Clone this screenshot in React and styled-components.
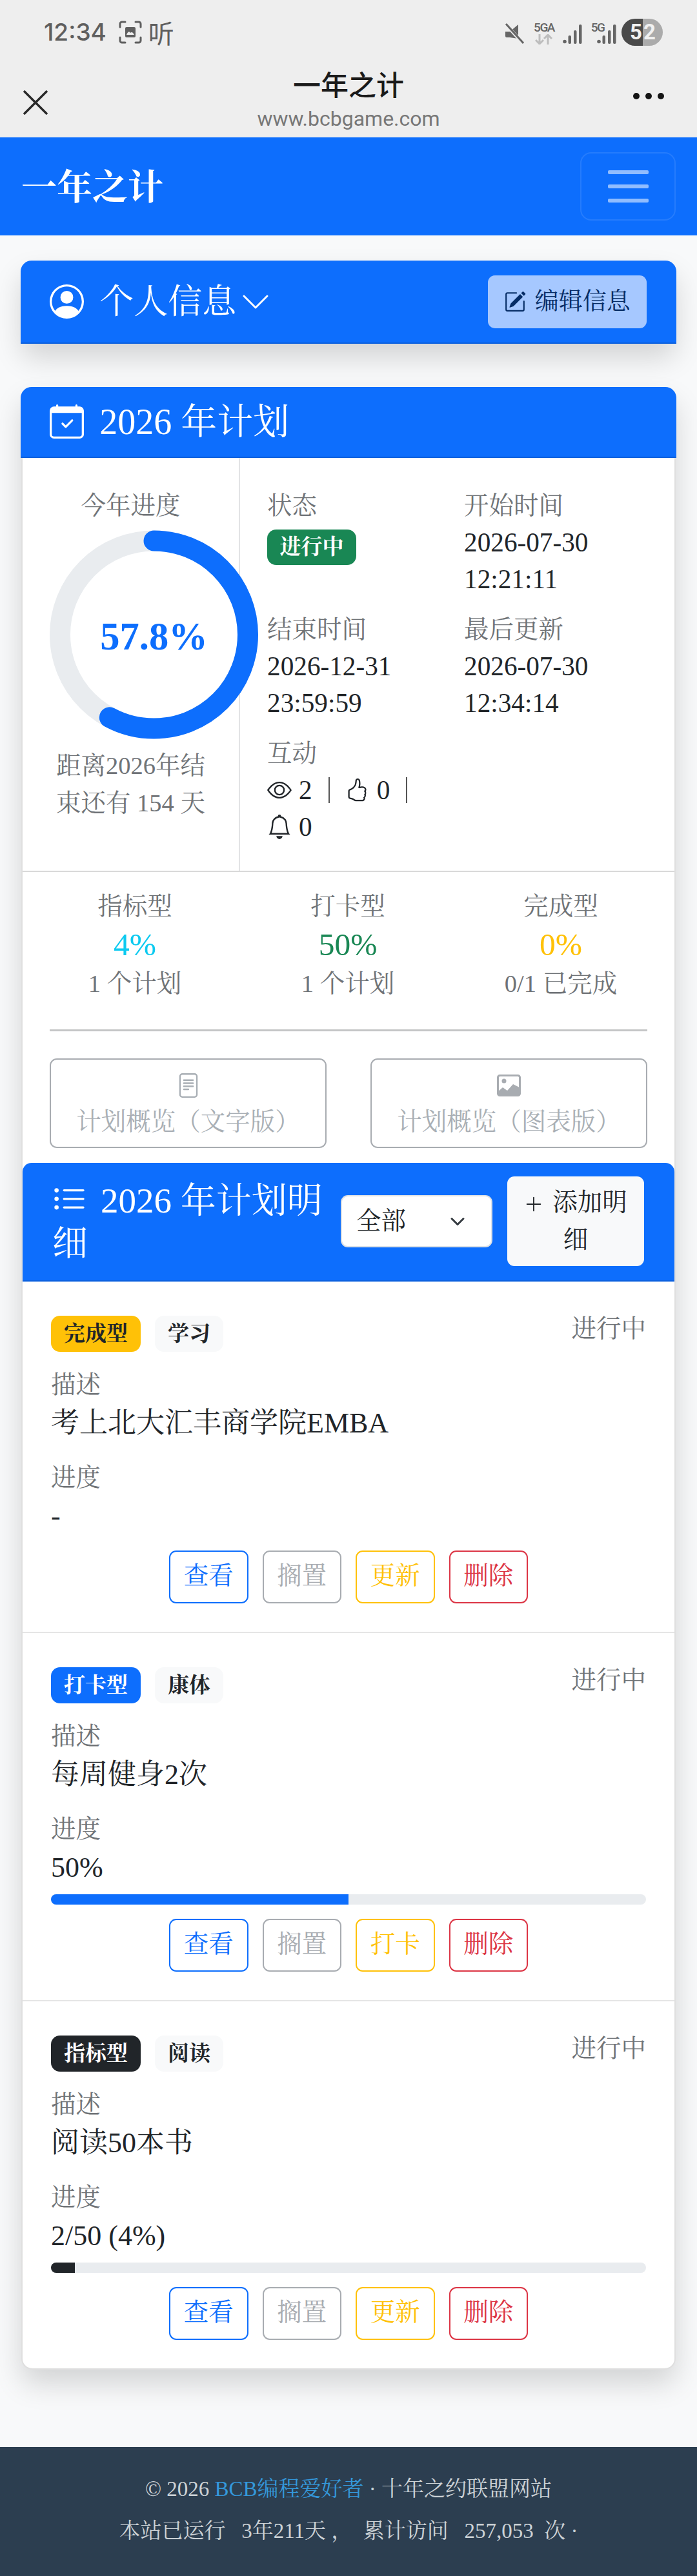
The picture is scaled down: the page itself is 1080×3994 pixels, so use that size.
import React from 'react'
import styled, { createGlobalStyle } from 'styled-components'
import {
  BsPersonCircle, BsPencilSquare, BsCalendarCheck, BsEye, BsHandThumbsUp, BsBell,
  BsFileText, BsListUl, BsPlusLg, BsChevronDown,
} from 'react-icons/bs'

const GlobalStyle = createGlobalStyle`
  html, body { margin: 0; padding: 0; }
  body {
    background: #f8f9fa;
    color: #212529;
    font-family: "Liberation Serif", "Noto Serif CJK SC", "Noto Sans CJK SC", serif;
    font-size: 44px;
    line-height: 1.5;
  }
  * { box-sizing: border-box; }
`

const Page = styled.div`
  width: 1080px;
  height: 3994px;
  overflow: hidden;
  display: flex;
  flex-direction: column;
`

/* phone chrome */
const Chrome = styled.div`
  height: 213px;
  flex-shrink: 0;
  background: #eeeeee;
  display: flex;
  flex-direction: column;
`
const StatusBar = styled.div`
  height: 100px;
  padding: 29px 53px 0 68px;
  display: flex;
  justify-content: space-between;
  align-items: flex-start;
`
const StatusLeft = styled.div`
  display: flex;
  align-items: center;
  height: 42px;
  gap: 19px;
  color: #5f5f5f;
  font-family: Inter, Roboto, sans-serif;
  font-size: 37px;
  font-weight: 500;
`
const ListenMark = styled.span`
  font-family: "Noto Sans CJK SC", sans-serif;
  font-size: 40px;
  font-weight: 400;
  margin-left: -9px;
`
const StatusRight = styled.div`
  display: flex;
  align-items: flex-start;
`
const NetStack = styled.div`
  width: 30px;
  margin-left: 16px;
  display: flex;
  flex-direction: column;
  align-items: center;
  color: #666;
  font-family: Roboto, sans-serif;
  font-size: 19px;
  font-weight: 500;
  letter-spacing: -1.5px;
  line-height: 20px;
  margin-top: 4px;
`
const Battery = styled.div`
  width: 64px;
  height: 42px;
  margin-left: 8px;
  border-radius: 21px;
  overflow: hidden;
  display: grid;
  grid-template-columns: 33px 31px;
  font-family: Roboto, sans-serif;
  font-size: 33px;
  font-weight: 700;
  line-height: 42px;
  color: #f1f1f1;
`
const BatteryCell = styled.span`
  background: ${p => p.$bg};
  text-align: ${p => p.$align};
  padding: ${p => p.$pad};
`
const TitleBar = styled.div`
  flex: 1;
  display: grid;
  grid-template-columns: 1fr auto 1fr;
  padding: 0 36px;
`
const CloseWrap = styled.div`
  padding-top: 31px;
`
const TitleBlock = styled.div`
  text-align: center;
`
const PageTitle = styled.div`
  font-family: "Noto Sans CJK SC", sans-serif;
  font-size: 43px;
  font-weight: 500;
  line-height: 58px;
  color: #1a1a1a;
`
const PageUrl = styled.div`
  font-family: Roboto, sans-serif;
  font-size: 32px;
  line-height: 40px;
  margin-top: 6px;
  color: #777;
`
const Dots = styled.div`
  justify-self: end;
  display: flex;
  gap: 9px;
  padding: 44px 15px 0 0;
`
const Dot = styled.span`
  width: 10px;
  height: 10px;
  border-radius: 50%;
  background: #141414;
`

/* site navbar */
const Navbar = styled.div`
  height: 152px;
  flex-shrink: 0;
  background: #0d6efd;
  padding: 0 33px;
  display: flex;
  justify-content: space-between;
  align-items: center;
`
const Brand = styled.div`
  color: #fff;
  font-size: 55px;
  font-weight: 700;
  line-height: 66px;
  padding-top: 4px;
`
const Toggler = styled.div`
  width: 148px;
  height: 106px;
  border: 2.75px solid rgba(255, 255, 255, 0.1);
  border-radius: 17px;
  display: flex;
  flex-direction: column;
  align-items: center;
  justify-content: center;
  gap: 16px;
`
const TogglerBar = styled.span`
  width: 63px;
  height: 6px;
  border-radius: 2px;
  background: rgba(255, 255, 255, 0.55);
`

const Main = styled.div`
  flex: 1;
  padding: 40px 33px 0;
  display: flex;
  flex-direction: column;
  gap: 68px;
`
const Card = styled.section`
  background: #fff;
  border-radius: 17px;
  box-shadow: 0 22px 44px rgba(0, 0, 0, 0.15);
  border: 2.75px solid rgba(0, 0, 0, 0.125);
`
const ProfileHeader = styled.div`
  height: 129px;
  margin: -2.75px;
  background: #0d6efd;
  border-radius: 17px 17px 0 0;
  border-bottom: 2.75px solid rgba(0, 0, 0, 0.125);
  padding: 0 46px 0 45px;
  display: flex;
  align-items: center;
  justify-content: space-between;
`
const HeaderTitle = styled.div`
  display: flex;
  align-items: center;
  color: #fff;
  font-size: ${p => p.$size}px;
  line-height: 66px;
`
const EditButton = styled.div`
  width: 246px;
  height: 82px;
  background: #a6c8ff;
  color: #052c65;
  border-radius: 11px;
  font-size: 37px;
  display: flex;
  align-items: center;
  justify-content: center;
  gap: 14px;
`
const PlanHeader = styled.div`
  height: 110px;
  margin: -2.75px -2.75px 0;
  background: #0d6efd;
  border-radius: 17px 17px 0 0;
  border-bottom: 2.75px solid rgba(0, 0, 0, 0.125);
  padding: 0 45px;
  display: flex;
  align-items: center;
`
const Overview = styled.div`
  display: grid;
  grid-template-columns: 337px 1fr;
  height: 642px;
  border-bottom: 2.75px solid #d9d9d9;
`
const ProgressCol = styled.div`
  border-right: 2.75px solid #e2e3e5;
  padding: 45px 42px 0;
  text-align: center;
`
const MutedLine = styled.div`
  font-size: 38.5px;
  line-height: 58px;
  color: #6f7377;
  white-space: nowrap;
`
const Ring = styled.div`
  position: relative;
  width: 323px;
  height: 324px;
  margin: 9px 0 12px;
`
const RingValue = styled.div`
  position: absolute;
  inset: 0;
  padding-top: 8px;
  display: flex;
  align-items: center;
  justify-content: center;
  color: #0d6efd;
  font-size: 60.5px;
  font-weight: 700;
`
const InfoGrid = styled.div`
  display: grid;
  grid-template-columns: 305px 1fr;
  grid-auto-rows: 192px;
  padding: 45px 0 0 42px;
`
const InfoLine = styled.div`
  font-size: 41.25px;
  line-height: 57px;
  white-space: nowrap;
  display: flex;
  align-items: center;
`
const Divider = styled.span`
  width: 2px;
  height: 40px;
  background: #555;
  margin: 0 24px 0 25px;
`
const StatusBadge = styled.div`
  width: 138px;
  height: 55px;
  margin-top: 8px;
  background: #198754;
  color: #fff;
  border-radius: 14px;
  font-size: 33px;
  font-weight: 700;
  line-height: 55px;
  text-align: center;
`
const Stats = styled.div`
  padding: 24px 42px 0;
`
const StatsRow = styled.div`
  display: grid;
  grid-template-columns: repeat(3, 1fr);
  text-align: center;
  width: 990px;
  margin-left: -33px;
`
const StatValue = styled.div`
  color: ${p => p.$color};
  font-size: 49.5px;
  line-height: 62px;
`
const Rule = styled.div`
  height: 2.75px;
  margin: 42px 0 42px;
  background: #c4c5c6;
`
const OverviewButtons = styled.div`
  display: grid;
  grid-template-columns: 429px 429px;
  justify-content: space-between;
`
const OverviewButton = styled.div`
  height: 139px;
  border: 2.75px solid #a8acb1;
  border-radius: 11px;
  color: #a9afb5;
  font-size: 38.5px;
  line-height: 58px;
  padding-top: 21px;
  text-align: center;
  svg { display: block; margin: 0 auto 8px; }
`
const DetailHeader = styled.div`
  height: 184px;
  margin-top: 23px;
  background: #0d6efd;
  border-radius: 14px 14px 0 0;
  border-bottom: 2.75px solid rgba(0, 0, 0, 0.125);
  padding: 0 45px 0 46px;
  display: grid;
  grid-template-columns: 424px 235px 212px;
  column-gap: 23px;
  align-items: center;
`
const DetailTitle = styled.div`
  color: #fff;
  font-size: 55px;
  line-height: 66px;
  padding-top: 3px;
  svg { vertical-align: -7px; margin-right: 22px; }
`
const FilterSelect = styled.div`
  height: 81px;
  background: #fff;
  border-radius: 11px;
  padding: 0 38px 0 22px;
  font-size: 38.5px;
  display: flex;
  align-items: center;
  justify-content: space-between;
  border: 2.75px solid #dee2e6;
`
const AddButton = styled.div`
  height: 139px;
  background: #f8f9fa;
  border-radius: 11px;
  font-size: 38.5px;
  line-height: 58px;
  text-align: center;
  padding: 11px 20px;
  svg { vertical-align: -5px; margin-right: 14px; }
`
const Item = styled.article`
  padding: 44px;
  border-bottom: ${p => (p.$last ? 'none' : '2.75px solid #e5e5e5')};
`
const ItemTop = styled.div`
  display: flex;
  justify-content: space-between;
  align-items: flex-start;
  height: 65px;
  margin-bottom: 22px;
`
const Tags = styled.div`
  display: flex;
  gap: 22px;
  padding-top: 9px;
`
const Tag = styled.span`
  height: 56px;
  padding: 0 20px;
  background: ${p => p.$bg};
  color: ${p => p.$color};
  border-radius: 14px;
  font-size: 33px;
  font-weight: 700;
  line-height: 56px;
`
const StateText = styled.span`
  font-size: 38.5px;
  line-height: 58px;
  color: #6f7377;
`
const FieldValue = styled.div`
  font-size: 44px;
  line-height: 62px;
  margin-bottom: ${p => p.$mb || 0}px;
`
const Track = styled.div`
  height: 16px;
  margin-top: 10px;
  background: #e9ecef;
  border-radius: 8px;
  overflow: hidden;
`
const Fill = styled.div`
  height: 100%;
  background: ${p => p.$color};
`
const Actions = styled.div`
  display: flex;
  justify-content: center;
  gap: 22px;
  margin-top: 22px;
`
const ActionButton = styled.div`
  width: 122.5px;
  height: 82px;
  border: 2.75px solid ${p => p.$color};
  color: ${p => p.$color};
  border-radius: 11px;
  font-size: 38.5px;
  line-height: 74px;
  text-align: center;
`
const Spacer = styled.div`
  flex: 1;
`
const Footer = styled.footer`
  height: 200px;
  flex-shrink: 0;
  background: #2c3e50;
  color: #ccd2d6;
  font-size: 33px;
  text-align: center;
  padding-top: 33px;
`
const FooterLine = styled.div`
  line-height: 65px;
  white-space: pre;
`
const FooterLink = styled.span`
  color: #3498db;
`

const Signal = ({ short }) => (
  <svg width="30" height="30" viewBox="0 0 30 30" fill="#666" style={{ marginTop: 9, marginLeft: short ? -13 : 14 }}>
    <circle cx="3" cy="26.5" r="2.8" />
    <rect x="8.5" y="17" width="4.5" height="13" rx="2" />
    <rect x="17" y="9" width="4.5" height="21" rx="2" />
    <rect x="25" y="0" width="4.5" height="30" rx="2" />
  </svg>
)

const items = [
  {
    kind: '完成型', kindBg: '#ffc107', kindColor: '#212529', tag: '学习',
    desc: '考上北大汇丰商学院EMBA', progress: '-', action: '更新',
  },
  {
    kind: '打卡型', kindBg: '#0d6efd', kindColor: '#fff', tag: '康体',
    desc: '每周健身2次', progress: '50%', action: '打卡', pct: 50, bar: '#0d6efd',
  },
  {
    kind: '指标型', kindBg: '#212529', kindColor: '#fff', tag: '阅读',
    desc: '阅读50本书', progress: '2/50 (4%)', action: '更新', pct: 4, bar: '#212529',
  },
]

const stats = [
  { label: '指标型', value: '4%', color: '#0dcaf0', sub: '1 个计划' },
  { label: '打卡型', value: '50%', color: '#198754', sub: '1 个计划' },
  { label: '完成型', value: '0%', color: '#ffc107', sub: '0/1 已完成' },
]

const RADIUS = 145.5
const CIRC = 2 * Math.PI * RADIUS

export default function App() {
  return (
    <Page>
      <GlobalStyle />
      <Chrome>
        <StatusBar>
          <StatusLeft>
            <span>12:34</span>
            <svg width="36" height="36" viewBox="0 0 36 36" fill="none" stroke="#5f5f5f" strokeWidth="3" strokeLinecap="round">
              <path d="M2 10V5a3 3 0 0 1 3-3h5M26 2h5a3 3 0 0 1 3 3v5M34 26v5a3 3 0 0 1-3 3h-5M10 34H5a3 3 0 0 1-3-3v-5" />
              <rect x="10" y="10" width="16" height="16" rx="2" fill="#5f5f5f" stroke="none" />
              <path d="M12 22c2-5 4-6 6-3 2-2 4-1 6 3z" fill="#eee" stroke="none" />
            </svg>
            <ListenMark>听</ListenMark>
          </StatusLeft>
          <StatusRight>
            <svg width="30" height="34" viewBox="0 0 30 34" fill="#666" style={{ marginTop: 7 }}>
              <path d="M1 13h7L21 2v22L8 22H3a2 2 0 0 1-2-2z" />
              <path d="M2 2l27 30" stroke="#eee" strokeWidth="5" />
              <path d="M2 1l27 30" stroke="#666" strokeWidth="3" />
            </svg>
            <NetStack>
              <span>5GA</span>
              <svg width="28" height="16" viewBox="0 0 28 16" fill="none" stroke="#bdbdbd" strokeWidth="3">
                <path d="M7 0v15M1 9l6 6 6-6" />
                <path d="M20 16V1M14 7l6-6 6 6" />
              </svg>
            </NetStack>
            <Signal />
            <NetStack style={{ marginLeft: 12, width: 24 }}>
              <span>5G</span>
            </NetStack>
            <Signal short />
            <Battery>
              <BatteryCell $bg="#4a4a4a" $align="right" $pad="0 1px 0 0">5</BatteryCell>
              <BatteryCell $bg="#ababab" $align="left" $pad="0 0 0 1px">2</BatteryCell>
            </Battery>
          </StatusRight>
        </StatusBar>
        <TitleBar>
          <CloseWrap>
            <svg width="38" height="38" viewBox="0 0 38 38" stroke="#2b2b2b" strokeWidth="3.5">
              <path d="M1 1l36 36M37 1L1 37" />
            </svg>
          </CloseWrap>
          <TitleBlock>
            <PageTitle>一年之计</PageTitle>
            <PageUrl>www.bcbgame.com</PageUrl>
          </TitleBlock>
          <Dots>
            <Dot />
            <Dot />
            <Dot />
          </Dots>
        </TitleBar>
      </Chrome>

      <Navbar>
        <Brand>一年之计</Brand>
        <Toggler>
          <TogglerBar />
          <TogglerBar />
          <TogglerBar />
        </Toggler>
      </Navbar>

      <Main>
        <Card>
          <ProfileHeader>
            <HeaderTitle $size={53}>
              <BsPersonCircle size={53} style={{ marginRight: 24 }} />
              个人信息
              <BsChevronDown size={48} style={{ marginLeft: 6 }} />
            </HeaderTitle>
            <EditButton>
              <BsPencilSquare size={34} />
              编辑信息
            </EditButton>
          </ProfileHeader>
        </Card>

        <Card>
          <PlanHeader>
            <HeaderTitle $size={56}>
              <BsCalendarCheck size={53} style={{ marginRight: 24 }} />
              2026 年计划
            </HeaderTitle>
          </PlanHeader>
          <Overview>
            <ProgressCol>
              <MutedLine>今年进度</MutedLine>
              <Ring>
                <svg width="323" height="324" viewBox="0 0 323 324" fill="none" strokeWidth="32">
                  <circle cx="161.5" cy="162" r={RADIUS} stroke="#e9ecef" />
                  <circle
                    cx="161.5"
                    cy="162"
                    r={RADIUS}
                    stroke="#0d6efd"
                    strokeLinecap="round"
                    strokeDasharray={`${CIRC * 0.578} ${CIRC}`}
                    transform="rotate(-90 161.5 162)"
                  />
                </svg>
                <RingValue>57.8%</RingValue>
              </Ring>
              <MutedLine>距离2026年结</MutedLine>
              <MutedLine>束还有 154 天</MutedLine>
            </ProgressCol>
            <InfoGrid>
              <div>
                <MutedLine>状态</MutedLine>
                <StatusBadge>进行中</StatusBadge>
              </div>
              <div>
                <MutedLine>开始时间</MutedLine>
                <InfoLine>2026-07-30</InfoLine>
                <InfoLine>12:21:11</InfoLine>
              </div>
              <div>
                <MutedLine>结束时间</MutedLine>
                <InfoLine>2026-12-31</InfoLine>
                <InfoLine>23:59:59</InfoLine>
              </div>
              <div>
                <MutedLine>最后更新</MutedLine>
                <InfoLine>2026-07-30</InfoLine>
                <InfoLine>12:34:14</InfoLine>
              </div>
              <div>
                <MutedLine>互动</MutedLine>
                <InfoLine>
                  <BsEye size={38} style={{ marginRight: 11 }} />2
                  <Divider />
                  <BsHandThumbsUp size={36} style={{ marginRight: 13 }} />0
                  <Divider />
                </InfoLine>
                <InfoLine>
                  <BsBell size={38} style={{ marginRight: 11 }} />0
                </InfoLine>
              </div>
            </InfoGrid>
          </Overview>

          <Stats>
            <StatsRow>
              {stats.map(s => (
                <div key={s.label}>
                  <MutedLine>{s.label}</MutedLine>
                  <StatValue $color={s.color}>{s.value}</StatValue>
                  <MutedLine>{s.sub}</MutedLine>
                </div>
              ))}
            </StatsRow>
            <Rule />
            <OverviewButtons>
              <OverviewButton>
                <BsFileText size={38} />
                计划概览（文字版）
              </OverviewButton>
              <OverviewButton>
                <svg width="37" height="38" viewBox="0 0 37 38" fill="#a8acb1">
                  <rect x="1.5" y="3.5" width="34" height="31" rx="3" fill="none" stroke="#a8acb1" strokeWidth="3" />
                  <circle cx="11" cy="12" r="3.5" />
                  <path d="M2 28l7-6 7 5 9-10 10 5v9a3 3 0 0 1-3 3H5a3 3 0 0 1-3-3z" />
                </svg>
                计划概览（图表版）
              </OverviewButton>
            </OverviewButtons>
          </Stats>

          <DetailHeader>
            <DetailTitle>
              <BsListUl size={53} />
              2026 年计划明细
            </DetailTitle>
            <FilterSelect>
              全部
              <svg width="28" height="24" viewBox="0 0 16 16" fill="none" stroke="#343a40" strokeWidth="2" strokeLinecap="round" strokeLinejoin="round">
                <path d="M2 5l6 6 6-6" />
              </svg>
            </FilterSelect>
            <AddButton>
              <BsPlusLg size={30} />
              添加明细
            </AddButton>
          </DetailHeader>

          {items.map((it, i) => (
            <Item key={it.kind} $last={i === items.length - 1}>
              <ItemTop>
                <Tags>
                  <Tag $bg={it.kindBg} $color={it.kindColor}>{it.kind}</Tag>
                  <Tag $bg="#f8f9fa" $color="#212529">{it.tag}</Tag>
                </Tags>
                <StateText>进行中</StateText>
              </ItemTop>
              <MutedLine>描述</MutedLine>
              <FieldValue $mb={24}>{it.desc}</FieldValue>
              <MutedLine>进度</MutedLine>
              <FieldValue>{it.progress}</FieldValue>
              {it.pct !== undefined && (
                <Track>
                  <Fill $color={it.bar} style={{ width: `${it.pct}%` }} />
                </Track>
              )}
              <Actions>
                <ActionButton $color="#0d6efd">查看</ActionButton>
                <ActionButton $color="#a8acb1">搁置</ActionButton>
                <ActionButton $color="#ffc107">{it.action}</ActionButton>
                <ActionButton $color="#dc3545">删除</ActionButton>
              </Actions>
            </Item>
          ))}
        </Card>
        <Spacer />
      </Main>

      <Footer>
        <FooterLine>© 2026 <FooterLink>BCB编程爱好者</FooterLink> · 十年之约联盟网站</FooterLine>
        <FooterLine>本站已运行   3年211天 ，  累计访问   257,053  次 ·</FooterLine>
      </Footer>
    </Page>
  )
}
